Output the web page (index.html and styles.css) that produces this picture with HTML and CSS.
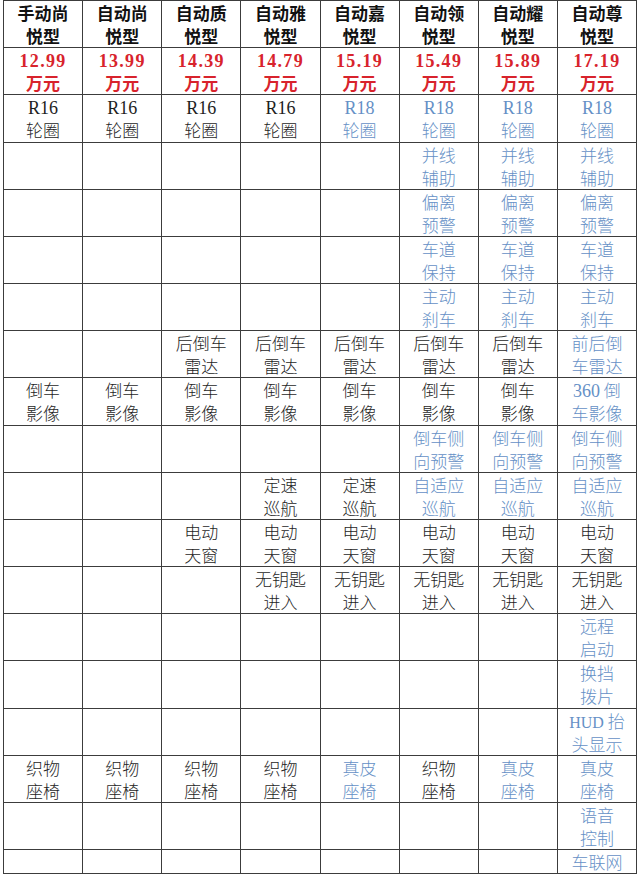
FILE: index.html
```html
<!DOCTYPE html>
<html lang="zh-CN">
<head>
<meta charset="utf-8">
<title>悦型配置对比</title>
<link rel="stylesheet" href="styles.css">
</head>
<body>
<table class="spec">
<colgroup>
<col><col><col><col><col><col><col><col>
</colgroup>
<tr class="head">
<th>手动尚<br>悦型</th><th>自动尚<br>悦型</th><th>自动质<br>悦型</th><th>自动雅<br>悦型</th><th>自动嘉<br>悦型</th><th>自动领<br>悦型</th><th>自动耀<br>悦型</th><th>自动尊<br>悦型</th>
</tr>
<tr class="price">
<td><span class="num">12.99</span><br>万元</td><td><span class="num">13.99</span><br>万元</td><td><span class="num">14.39</span><br>万元</td><td><span class="num">14.79</span><br>万元</td><td><span class="num">15.19</span><br>万元</td><td><span class="num">15.49</span><br>万元</td><td><span class="num">15.89</span><br>万元</td><td><span class="num">17.19</span><br>万元</td>
</tr>
<tr>
<td><span class="lat">R16</span><br>轮圈</td><td><span class="lat">R16</span><br>轮圈</td><td><span class="lat">R16</span><br>轮圈</td><td><span class="lat">R16</span><br>轮圈</td><td class="up"><span class="lat">R18</span><br>轮圈</td><td class="up"><span class="lat">R18</span><br>轮圈</td><td class="up"><span class="lat">R18</span><br>轮圈</td><td class="up"><span class="lat">R18</span><br>轮圈</td>
</tr>
<tr>
<td></td><td></td><td></td><td></td><td></td><td class="up">并线<br>辅助</td><td class="up">并线<br>辅助</td><td class="up">并线<br>辅助</td>
</tr>
<tr>
<td></td><td></td><td></td><td></td><td></td><td class="up">偏离<br>预警</td><td class="up">偏离<br>预警</td><td class="up">偏离<br>预警</td>
</tr>
<tr>
<td></td><td></td><td></td><td></td><td></td><td class="up">车道<br>保持</td><td class="up">车道<br>保持</td><td class="up">车道<br>保持</td>
</tr>
<tr>
<td></td><td></td><td></td><td></td><td></td><td class="up">主动<br>刹车</td><td class="up">主动<br>刹车</td><td class="up">主动<br>刹车</td>
</tr>
<tr>
<td></td><td></td><td>后倒车<br>雷达</td><td>后倒车<br>雷达</td><td>后倒车<br>雷达</td><td>后倒车<br>雷达</td><td>后倒车<br>雷达</td><td class="up">前后倒<br>车雷达</td>
</tr>
<tr>
<td>倒车<br>影像</td><td>倒车<br>影像</td><td>倒车<br>影像</td><td>倒车<br>影像</td><td>倒车<br>影像</td><td>倒车<br>影像</td><td>倒车<br>影像</td><td class="up"><span class="lat">360</span> 倒<br>车影像</td>
</tr>
<tr>
<td></td><td></td><td></td><td></td><td></td><td class="up">倒车侧<br>向预警</td><td class="up">倒车侧<br>向预警</td><td class="up">倒车侧<br>向预警</td>
</tr>
<tr>
<td></td><td></td><td></td><td>定速<br>巡航</td><td>定速<br>巡航</td><td class="up">自适应<br>巡航</td><td class="up">自适应<br>巡航</td><td class="up">自适应<br>巡航</td>
</tr>
<tr>
<td></td><td></td><td>电动<br>天窗</td><td>电动<br>天窗</td><td>电动<br>天窗</td><td>电动<br>天窗</td><td>电动<br>天窗</td><td>电动<br>天窗</td>
</tr>
<tr>
<td></td><td></td><td></td><td>无钥匙<br>进入</td><td>无钥匙<br>进入</td><td>无钥匙<br>进入</td><td>无钥匙<br>进入</td><td>无钥匙<br>进入</td>
</tr>
<tr>
<td></td><td></td><td></td><td></td><td></td><td></td><td></td><td class="up">远程<br>启动</td>
</tr>
<tr>
<td></td><td></td><td></td><td></td><td></td><td></td><td></td><td class="up">换挡<br>拨片</td>
</tr>
<tr>
<td></td><td></td><td></td><td></td><td></td><td></td><td></td><td class="up"><span class="lat hud">HUD</span> 抬<br>头显示</td>
</tr>
<tr>
<td>织物<br>座椅</td><td>织物<br>座椅</td><td>织物<br>座椅</td><td>织物<br>座椅</td><td class="up">真皮<br>座椅</td><td>织物<br>座椅</td><td class="up">真皮<br>座椅</td><td class="up">真皮<br>座椅</td>
</tr>
<tr>
<td></td><td></td><td></td><td></td><td></td><td></td><td></td><td class="up">语音<br>控制</td>
</tr>
<tr class="single">
<td></td><td></td><td></td><td></td><td></td><td></td><td></td><td class="up">车联网</td>
</tr>
</table>
</body>
</html>
```
FILE: styles.css
```css
html, body {
  margin: 0;
  padding: 0;
  background: #ffffff;
}

body {
  padding: 0 0 0 3px;
  font-family: "Noto Sans CJK SC", "Noto Sans", sans-serif;
  color: #1e1e1e;
}

.spec {
  border-collapse: collapse;
  table-layout: fixed;
  width: 634px;
}

.spec col {
  width: 79px;
}

.spec th,
.spec td {
  border: 1px solid #3c3c3c;
  padding: 0;
  height: 47.18px;
  box-sizing: border-box;
  text-align: center;
  vertical-align: middle;
  font-size: 17px;
  line-height: 23px;
  font-weight: 300;
  white-space: nowrap;
  overflow: hidden;
}

.spec .head th {
  font-weight: 700;
  color: #111111;
}

.spec .price td {
  color: #d8232c;
  font-weight: 700;
}

.num {
  font-family: "Liberation Serif", "DejaVu Serif", serif;
  font-size: 18px;
  line-height: 1;
  letter-spacing: 1.3px;
}

.lat {
  font-family: "Liberation Serif", "DejaVu Serif", serif;
  font-size: 18px;
  line-height: 1;
}

.hud {
  font-size: 16px;
}

.spec td.up {
  color: #6590c6;
}

.spec .single td {
  height: 24px;
}
```
